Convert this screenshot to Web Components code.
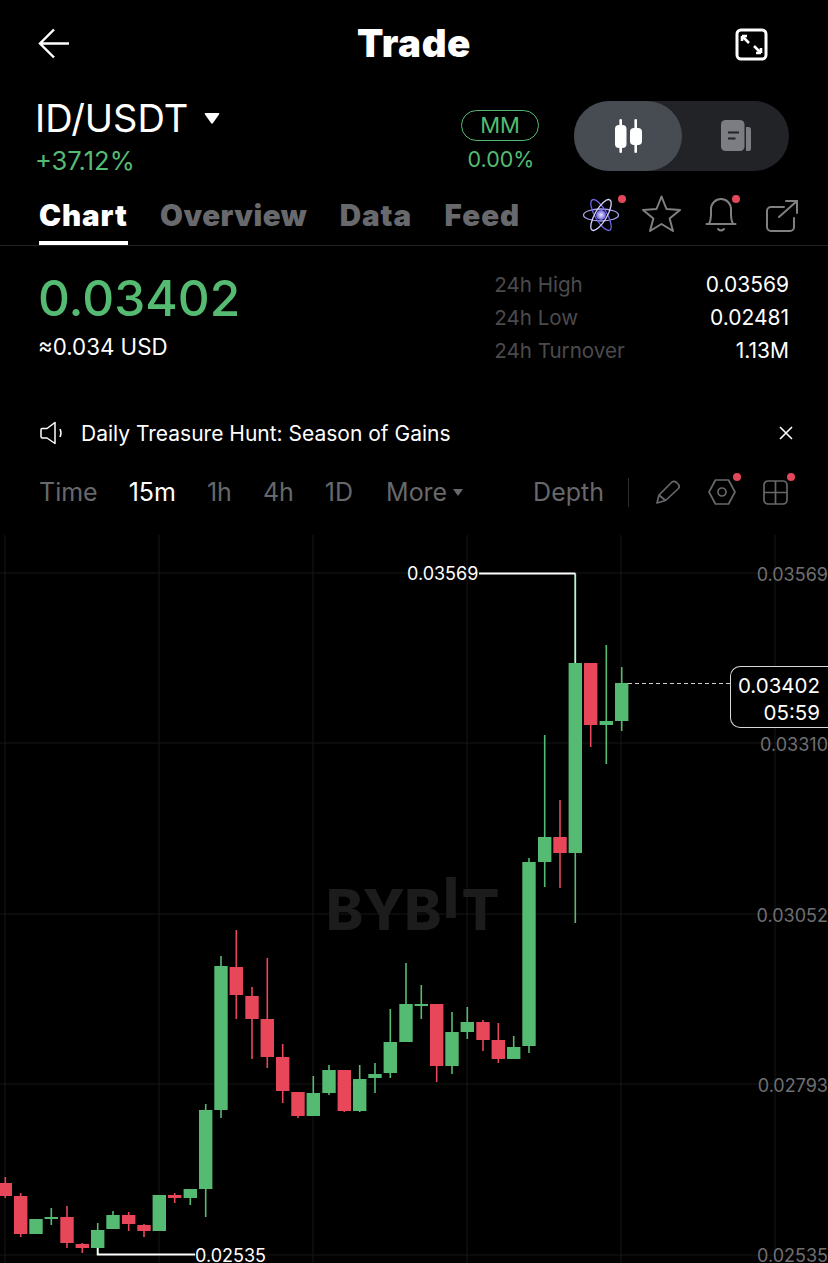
<!DOCTYPE html>
<html>
<head>
<meta charset="utf-8">
<title>Trade</title>
<style>
  html, body { margin: 0; background: #000; }
  body { width: 828px; height: 1263px; overflow: hidden; font-family: Inter, "Liberation Sans", sans-serif; color: #fff; }
</style>
</head>
<body>
<trade-page>
  <top-bar>Trade</top-bar>
  <pair-row pair="ID/USDT" change="+37.12%" mm="0.00%"></pair-row>
  <tab-bar></tab-bar>
  <price-panel></price-panel>
  <notice-bar>Daily Treasure Hunt: Season of Gains</notice-bar>
  <time-bar></time-bar>
  <kline-chart></kline-chart>
</trade-page>

<script>
  // small helper, every element just sets its shadow markup once
  class Base extends HTMLElement {
    render(html) {
      this.attachShadow({ mode: 'open' }).innerHTML = html;
    }
  }

  class TradePage extends Base {
    constructor() {
      super();
      this.render(`<style>
        :host { display: flex; flex-direction: column; width: 828px; height: 1263px; background: #000; }
      </style><slot></slot>`);
    }
  }

  class TopBar extends Base {
    constructor() {
      super();
      this.render(`<style>
        :host { display: flex; align-items: center; justify-content: space-between; height: 88px; padding: 0 60px 0 38px; position: relative; }
        .title { position: absolute; left: 0; right: 0; top: 21px; line-height: 44px; text-align: center; font-size: 38.5px; font-weight: 900; letter-spacing: .6px; pointer-events: none; }
        svg { display: block; }
      </style>
      <svg width="32" height="32" viewBox="0 0 32 32" fill="none" stroke="#fff" stroke-width="2.4">
        <path d="M31 15.5H3M16 1.5L2 15.5L16 29.5"/>
      </svg>
      <div class="title"><slot></slot></div>
      <svg width="33" height="33" viewBox="0 0 33 33" fill="none" stroke="#fff">
        <rect x="2" y="2" width="29" height="29" rx="4" stroke-width="3"/>
        <path stroke-width="2.6" d="M7 8L14 15M7 8V13M7 8H12M26 25L19 18M26 25V20M26 25H21"/>
      </svg>`);
    }
  }

  class PairRow extends Base {
    constructor() {
      super();
      const a = (n) => this.getAttribute(n);
      this.render(`<style>
        :host { display: flex; align-items: flex-start; height: 102px; padding: 13px 39px 0 35px; box-sizing: border-box; }
        .left { flex: 1; }
        .pair { display: flex; align-items: center; gap: 16px; font-size: 38px; line-height: 37px; height: 37px; margin-top: -1px; }
        .change { color: #56bb72; font-size: 25.5px; line-height: 30px; margin-top: 9px; }
        .mm { width: 80px; display: flex; flex-direction: column; align-items: center; margin: 9px 34px 0 0; }
        .badge { width: 76px; height: 29px; border: 1px solid #56bb72; border-radius: 16px; color: #56bb72; font-size: 22px; line-height: 29px; text-align: center; }
        .mmv { color: #56bb72; font-size: 21.5px; line-height: 26px; margin: 5px 0 0 2px; }
        .toggle { width: 215px; height: 70px; border-radius: 35px; background: #212326; display: flex; }
        .pill { width: 108px; height: 70px; border-radius: 35px; background: #474b52; display: flex; align-items: center; justify-content: center; }
        .other { flex: 1; display: flex; align-items: center; justify-content: center; }
        svg { display: block; }
      </style>
      <div class="left">
        <div class="pair"><span>${a('pair')}</span>
          <svg width="16" height="13" viewBox="0 0 16 13"><path d="M1.5 1H14.5Q16 1 15 2.5L9 11Q8 12.5 7 11L1 2.5Q0 1 1.5 1Z" fill="#fff"/></svg>
        </div>
        <div class="change">${a('change')}</div>
      </div>
      <div class="mm"><div class="badge">MM</div><div class="mmv">${a('mm')}</div></div>
      <div class="toggle">
        <div class="pill">
          <svg width="32" height="36" viewBox="0 0 32 36" fill="#fff">
            <rect x="7.4" y="1" width="2.6" height="34" rx="1.3"/><rect x="3" y="7" width="11.5" height="23" rx="4"/>
            <rect x="22.4" y="1" width="2.6" height="34" rx="1.3"/><rect x="18" y="10" width="12" height="17" rx="4"/>
          </svg>
        </div>
        <div class="other">
          <svg width="32" height="32" viewBox="0 0 32 32">
            <rect x="1" y="0" width="23.5" height="31" rx="4.5" fill="#7b7d82"/>
            <path d="M26 7H28.5Q31 7 31 9.5V28.5Q31 31 28.5 31H26Z" fill="#7b7d82"/>
            <path d="M8 12.5H19M8 18.5H15.5" stroke="#212326" stroke-width="2.2"/>
          </svg>
        </div>
      </div>`);
    }
  }

  class TabBar extends Base {
    constructor() {
      super();
      this.render(`<style>
        :host { display: flex; align-items: flex-start; justify-content: space-between; height: 56px; box-sizing: border-box; padding: 0 27px 0 39px; border-bottom: 1px solid #222; }
        .tabs { display: flex; gap: 32.5px; }
        .tab { font-size: 29.6px; font-weight: 900; color: #68696c; line-height: 51px; height: 55px; box-sizing: border-box; letter-spacing: .45px; }
        .tab.on { color: #fff; border-bottom: 4px solid #fff; letter-spacing: .85px; }
        .tab.wide { letter-spacing: .95px; }
        .icons { display: flex; gap: 20px; margin-top: 5px; }
        svg { display: block; overflow: visible; }
      </style>
      <div class="tabs">
        <div class="tab on">Chart</div><div class="tab">Overview</div><div class="tab wide">Data</div><div class="tab wide">Feed</div>
      </div>
      <div class="icons">
        <svg width="40" height="40" viewBox="0 0 40 40" fill="none" stroke="#a9a4f5" stroke-width="1.3">
          <defs><radialGradient id="g"><stop offset="0" stop-color="#e8e4ff"/><stop offset="1" stop-color="#6a5fe0"/></radialGradient></defs>
          <ellipse cx="20" cy="20" rx="17.5" ry="6"/>
          <ellipse cx="20" cy="20" rx="17.5" ry="6" transform="rotate(60 20 20)" stroke="#6f66e8"/>
          <ellipse cx="20" cy="20" rx="17.5" ry="6" transform="rotate(120 20 20)" stroke="#d6d3ff"/>
          <circle cx="20" cy="20" r="5" fill="url(#g)" stroke="none"/>
          <circle cx="41" cy="4" r="4" fill="#e2475a" stroke="none"/>
        </svg>
        <svg width="40" height="40" viewBox="0 0 40 40" fill="none" stroke="#808080" stroke-width="2" stroke-linejoin="round">
          <path d="M20.5 1.5L25.5 14L39 15L28.6 23.6L32 36L20.5 29L9 36L12.4 23.6L2 15L15.5 14Z"/>
        </svg>
        <svg width="40" height="40" viewBox="0 0 40 40" fill="none" stroke="#808080" stroke-width="2" stroke-linecap="round">
          <path d="M5.5 29H34.5M8 29C9 27 10 25 10 20V14A10 10 0 0 1 30 14V20C30 25 31 27 32 29M17 34Q20 37 23 34"/>
          <circle cx="35" cy="4" r="4" fill="#e2475a" stroke="none"/>
        </svg>
        <svg width="40" height="40" viewBox="0 0 40 40" fill="none" stroke="#808080" stroke-width="2" stroke-linecap="round">
          <path d="M23 12H10A4 4 0 0 0 6 16V32A4 4 0 0 0 10 36H29A4 4 0 0 0 33 32V23M18 22L36 6M25 6H36V18"/>
        </svg>
      </div>`);
    }
  }

  class PricePanel extends Base {
    constructor() {
      super();
      this.render(`<style>
        :host { display: flex; justify-content: space-between; height: 153px; box-sizing: border-box; padding: 22px 39px 0 38px; }
        .price { color: #56bb72; font-size: 49.5px; font-weight: 500; line-height: 60px; }
        .usd { font-size: 22.3px; line-height: 26px; margin-top: 6px; }
        .stats { display: grid; grid-template-columns: auto auto; column-gap: 81px; grid-auto-rows: 32.8px; line-height: 33px; margin-top: 0; }
        .k { color: #4b4b4d; font-size: 20.6px; }
        .v { text-align: right; font-size: 21px; }
      </style>
      <div>
        <div class="price">0.03402</div>
        <div class="usd">≈0.034 USD</div>
      </div>
      <div class="stats">
        <div class="k">24h High</div><div class="v">0.03569</div>
        <div class="k">24h Low</div><div class="v">0.02481</div>
        <div class="k">24h Turnover</div><div class="v">1.13M</div>
      </div>`);
    }
  }

  class NoticeBar extends Base {
    constructor() {
      super();
      this.render(`<style>
        :host { display: flex; align-items: center; height: 68px; box-sizing: border-box; padding: 0 35px 0 40px; font-size: 21px; }
        .txt { flex: 1; margin-left: 18px; }
        svg { display: block; }
      </style>
      <svg width="23" height="24" viewBox="0 0 23 24" fill="none" stroke="#fff" stroke-width="1.5" stroke-linejoin="round">
        <path d="M2 7.5H7L15 1.5V22.5L7 17H2.5Q1 17 1 15.5V9Q1 7.5 2 7.5Z"/><path d="M20 8Q22 12 20 16"/>
      </svg>
      <div class="txt"><slot></slot></div>
      <svg width="14" height="14" viewBox="0 0 14 14" stroke="#fff" stroke-width="1.6"><path d="M1 1L13 13M13 1L1 13"/></svg>`);
    }
  }

  class TimeBar extends Base {
    constructor() {
      super();
      this.render(`<style>
        :host { display: flex; align-items: center; height: 44px; box-sizing: border-box; padding: 0 40px 0 39px; font-size: 25px; color: #67686b; margin-top: 3px; }
        span { display: block; }
        .on { color: #fff; }
        .more { display: flex; align-items: center; gap: 6px; }
        .grow { flex: 1; }
        .div { width: 1px; height: 29px; background: #2c2c2e; margin: 0 27px 0 24px; }
        svg { display: block; overflow: visible; }
      </style>
      <span style="margin-right:31px">Time</span>
      <span class="on" style="margin-right:31px">15m</span>
      <span style="margin-right:31px">1h</span>
      <span style="margin-right:31px">4h</span>
      <span style="margin-right:33px">1D</span>
      <span class="more">More<svg width="10" height="7" viewBox="0 0 10 7"><path d="M0 0H10L5 7Z" fill="#67686b"/></svg></span>
      <div class="grow"></div>
      <span>Depth</span>
      <div class="div"></div>
      <svg width="24" height="24" viewBox="0 0 24 24" fill="none" stroke="#67686b" stroke-width="1.7" stroke-linejoin="round" style="margin-right:28px">
        <path d="M1 23L3 15L16 2Q18 0.5 20.5 2.5L22.5 4.5Q24 7 22.5 8.5L9.5 20.5ZM3 15L9.5 20.5"/>
      </svg>
      <svg width="28" height="26" viewBox="0 0 28 26" fill="none" stroke="#67686b" stroke-width="1.7" stroke-linejoin="round" style="margin-right:27px">
        <path d="M7.5 1H20.5L27 13L20.5 25H7.5L1 13Z"/><circle cx="14" cy="13" r="4"/>
        <circle cx="29" cy="-2" r="4" fill="#e2475a" stroke="none"/>
      </svg>
      <svg width="25" height="25" viewBox="0 0 25 25" fill="none" stroke="#67686b" stroke-width="1.7">
        <rect x="1" y="1" width="23" height="23" rx="4"/><path d="M12.5 1V24M1 12.5H24"/>
        <circle cx="28" cy="-3" r="4" fill="#e2475a" stroke="none"/>
      </svg>`);
    }
  }

  // x, wick top, wick bottom, body top, body bottom, colour (g/r)
  const CANDLES = [
    [5.3,1177,1198,1183,1196,'r'],[20.7,1193,1237,1196,1234,'r'],[36,1219,1234,1219,1234,'g'],
    [51.3,1208,1225,1217,1219,'g'],[67,1206,1248,1217,1243,'r'],[82.3,1243,1253,1244,1248,'r'],
    [97.7,1223,1255,1230,1248,'g'],[113,1211,1229,1215,1229,'g'],[128.7,1212,1231,1215,1224,'r'],
    [144,1224,1237,1225,1231,'r'],[159.3,1195,1231,1195,1231,'g'],[174.7,1193,1203,1195,1198,'r'],
    [190.3,1189,1205,1189,1198,'g'],[205.7,1104,1217,1110,1189,'g'],[221,956,1118,966,1110,'g'],
    [236.3,930,1019,967,995,'r'],[252,987,1059,996,1019,'r'],[267.3,958,1068,1019,1057,'r'],
    [282.7,1044,1103,1057,1091,'r'],[298,1092,1118,1092,1116,'r'],[313.3,1076,1116,1093,1116,'g'],
    [329,1065,1095,1070,1093,'g'],[344.3,1070,1112,1070,1111,'r'],[359.7,1065,1112,1079,1111,'g'],
    [375,1063,1093,1074,1078,'g'],[390.3,1009,1078,1042,1073,'g'],[406,963,1042,1004,1042,'g'],
    [421.3,985,1019,1004,1006,'g'],[436.7,1004,1082,1004,1066,'r'],[452,1012,1074,1032,1066,'g'],
    [467.3,1007,1039,1022,1032,'g'],[483,1020,1051,1022,1040,'r'],[498.3,1023,1063,1040,1059,'r'],
    [513.7,1036,1059,1047,1059,'g'],[529,858,1053,862,1046,'g'],[544.7,735,887,837,862,'g'],
    [560,800,888,837,853,'r'],[575.3,573,923,663,853,'g'],[590.7,663,747,663,725,'r'],
    [606.3,645,764,721,725,'g'],[621.7,667,731,683,721,'g']
  ];

  class KlineChart extends Base {
    constructor() {
      super();
      const TOP = 535;
      const col = { g: '#56bb72', r: '#e8475a' };
      let svg = '';
      [5, 159, 313, 467, 621, 775].forEach((x) => {
        svg += `<path d="M${x} ${TOP}V1263" stroke="#171717"/>`;
      });
      [573, 743, 914, 1084, 1255].forEach((y) => {
        svg += `<path d="M0 ${y}H828" stroke="#171717"/>`;
      });
      CANDLES.forEach(([x, wt, wb, bt, bb, c]) => {
        svg += `<rect x="${x - 0.8}" y="${wt}" width="1.6" height="${wb - wt}" fill="${col[c]}"/>`;
        svg += `<rect x="${x - 6.7}" y="${bt}" width="13.4" height="${bb - bt}" fill="${col[c]}"/>`;
      });
      // high and low markers, last price line
      svg += `<path d="M479 573.5H575.3" stroke="#fff" stroke-width="2"/>`;
      svg += `<path d="M575.3 574V663" stroke="#cde8d4" stroke-width="1.6"/>`;
      svg += `<path d="M97.7 1248V1254.5H195" fill="none" stroke="#fff" stroke-width="1.8"/>`;
      svg += `<path d="M628 683.5H730" stroke="#cfcfcf" stroke-dasharray="4 3"/>`;

      // label centres, the last ones touch the bottom of the window so keep the line box tight
      const axis = [[575, '0.03569'], [745, '0.03310'], [916, '0.03052'], [1086, '0.02793'], [1256, '0.02535']];
      this.render(`<style>
        :host { display: block; position: relative; flex: 1; min-height: 0; overflow: hidden; margin-top: 21px; font-size: 18px; }
        svg { position: absolute; left: 0; top: 0; display: block; }
        .axis { position: absolute; right: 0; color: #6f6f72; line-height: 14px; transform: translateY(-7px); }
        .mark { position: absolute; color: #fff; line-height: 14px; transform: translateY(-7px); }
        .box { position: absolute; left: 730px; top: ${666 - TOP}px; width: 98px; height: 62px; box-sizing: border-box; border: 1px solid #d8d8d8; border-right: 0; border-radius: 10px 0 0 10px; background: #000; text-align: right; padding: 6px 8px 0 0; font-size: 20.5px; line-height: 26.5px; }
        .logo { position: absolute; left: 326px; top: ${878 - TOP}px; height: 56px; color: #1c1c1c; font-size: 56px; font-weight: 800; line-height: 64px; display: flex; letter-spacing: -.5px; }
        .logo .i { transform: translateY(-12px); margin: 0 3px 0 2px; }
      </style>
      <svg width="828" height="${1263 - TOP}" viewBox="0 ${TOP} 828 ${1263 - TOP}">${svg}</svg>
      <div class="logo"><span>BYB</span><span class="i">I</span><span>T</span></div>
      ${axis.map(([y, t]) => `<div class="axis" style="top:${y - TOP}px">${t}</div>`).join('')}
      <div class="mark" style="left:407px;top:${574 - TOP}px">0.03569</div>
      <div class="mark" style="left:195px;top:${1256 - TOP}px">0.02535</div>
      <div class="box">0.03402<br>05:59</div>`);
    }
  }

  customElements.define('trade-page', TradePage);
  customElements.define('top-bar', TopBar);
  customElements.define('pair-row', PairRow);
  customElements.define('tab-bar', TabBar);
  customElements.define('price-panel', PricePanel);
  customElements.define('notice-bar', NoticeBar);
  customElements.define('time-bar', TimeBar);
  customElements.define('kline-chart', KlineChart);
</script>
</body>
</html>
